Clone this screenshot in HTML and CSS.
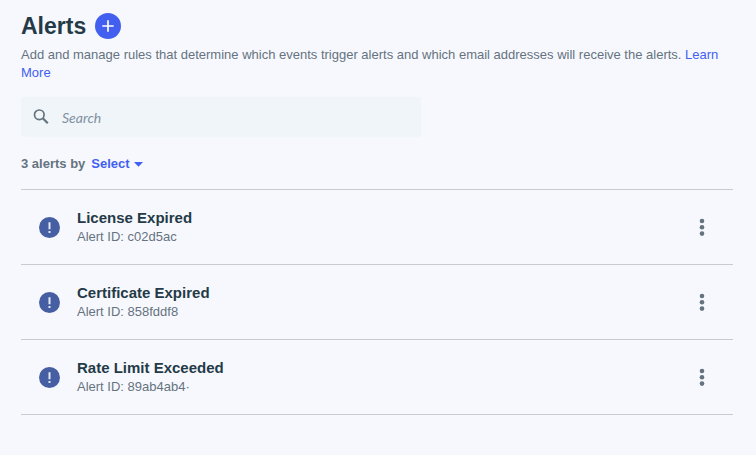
FILE: index.html
```html
<!DOCTYPE html>
<html lang="en">
<head>
  <meta charset="UTF-8" />
  <meta name="viewport" content="width=device-width, initial-scale=1.0" />
  <title>Alerts</title>
  <link rel="stylesheet" href="styles.css">
</head>
<body>
  <main>
    <header class="page-header">
      <h1>Alerts</h1>
      <button type="button" class="add-button" aria-label="Add alert">
        <svg width="26" height="26" viewBox="0 0 26 26"><path d="M13 7.3v11.4M7.3 13h11.4" stroke="#fff" stroke-width="1.7" /></svg>
      </button>
    </header>
    <p class="description">Add and manage rules that determine which events trigger alerts and which email addresses will receive the alerts. <a href="#">Learn More</a></p>

    <label class="search">
      <svg width="16" height="16" viewBox="0 0 16 16" fill="none" stroke="#65737e"><circle cx="6.3" cy="5.8" r="4.8" stroke-width="1.7" /><path d="M9.8 9.3l5 5" stroke-width="2.2" /></svg>
      <input type="search" placeholder="Search" aria-label="Search" />
    </label>

    <div class="sort">
      <label for="sort-by">3 alerts by</label>
      <div class="dropdown">
        <select id="sort-by">
          <option>Select</option>
        </select>
        <svg width="9" height="5" viewBox="0 0 9 5"><path d="M0 0h9L4.5 4.8z" fill="#415ff0" /></svg>
      </div>
    </div>

    <ul class="alerts">
      <li class="alert">
        <svg class="alert-icon" width="21" height="21" viewBox="0 0 21 21"><circle cx="10.5" cy="10.5" r="10.5" fill="#465fa3" /><path d="M9.5 5.2h2v7h-2zM9.5 13.9h2v2h-2z" fill="#e4e9f6" /></svg>
        <div class="info">
          <h2>License Expired</h2>
          <p>Alert ID: c02d5ac</p>
        </div>
        <button type="button" class="menu-button" aria-label="License Expired options">
          <svg width="6" height="18" viewBox="0 0 6 18" fill="#65737e"><circle cx="3" cy="3" r="2.3" /><circle cx="3" cy="9.3" r="2.3" /><circle cx="3" cy="15.6" r="2.3" /></svg>
        </button>
      </li>
      <li class="alert">
        <svg class="alert-icon" width="21" height="21" viewBox="0 0 21 21"><circle cx="10.5" cy="10.5" r="10.5" fill="#465fa3" /><path d="M9.5 5.2h2v7h-2zM9.5 13.9h2v2h-2z" fill="#e4e9f6" /></svg>
        <div class="info">
          <h2>Certificate Expired</h2>
          <p>Alert ID: 858fddf8</p>
        </div>
        <button type="button" class="menu-button" aria-label="Certificate Expired options">
          <svg width="6" height="18" viewBox="0 0 6 18" fill="#65737e"><circle cx="3" cy="3" r="2.3" /><circle cx="3" cy="9.3" r="2.3" /><circle cx="3" cy="15.6" r="2.3" /></svg>
        </button>
      </li>
      <li class="alert">
        <svg class="alert-icon" width="21" height="21" viewBox="0 0 21 21"><circle cx="10.5" cy="10.5" r="10.5" fill="#465fa3" /><path d="M9.5 5.2h2v7h-2zM9.5 13.9h2v2h-2z" fill="#e4e9f6" /></svg>
        <div class="info">
          <h2>Rate Limit Exceeded</h2>
          <p>Alert ID: 89ab4ab4·</p>
        </div>
        <button type="button" class="menu-button" aria-label="Rate Limit Exceeded options">
          <svg width="6" height="18" viewBox="0 0 6 18" fill="#65737e"><circle cx="3" cy="3" r="2.3" /><circle cx="3" cy="9.3" r="2.3" /><circle cx="3" cy="15.6" r="2.3" /></svg>
        </button>
      </li>
    </ul>
  </main>
</body>
</html>
```

FILE: styles.css
```css
* {
  box-sizing: border-box;
}
body {
  margin: 0;
  padding: 13px 23px 24px 21px;
  background-color: #f7f8fe;
  color: #65737e;
  font-family: "Liberation Sans", Arial, sans-serif;
  font-size: 13px;
  line-height: 18px;
}
h1, h2, p, ul {
  margin: 0;
  padding: 0;
}
button {
  padding: 0;
  border: none;
  background: none;
  cursor: pointer;
}
svg {
  display: block;
  flex: none;
}
a {
  color: #415ff0;
  text-decoration: none;
}
.page-header {
  display: flex;
  align-items: center;
  gap: 9px;
}
h1 {
  color: #243b47;
  font-size: 23px;
  line-height: 26px;
}
.add-button {
  border-radius: 50%;
  background-color: #435ff0;
}
.description {
  margin-top: 7px;
}
.search {
  display: flex;
  align-items: center;
  gap: 13px;
  max-width: 400px;
  height: 40px;
  margin-top: 15px;
  padding: 0 12px;
  border-radius: 2px;
  background-color: #eff5f8;
}
.search input {
  flex: 1;
  min-width: 0;
  padding: 0;
  border: none;
  outline: none;
  background: none;
  color: #243b47;
  font: 14px Lato, sans-serif;
}
.search input::placeholder {
  color: #8090a2;
  font-style: italic;
}
.sort {
  display: flex;
  align-items: center;
  gap: 6px;
  margin-top: 18px;
  font-weight: bold;
}
.dropdown {
  display: flex;
  align-items: center;
  gap: 4px;
}
.dropdown select {
  appearance: none;
  padding: 0;
  border: none;
  background: none;
  color: #415ff0;
  font: inherit;
  cursor: pointer;
}
.alerts {
  margin-top: 16px;
  border-top: 1px solid #c8cbd0;
  list-style: none;
}
.alert {
  display: flex;
  align-items: center;
  gap: 17px;
  padding: 18px;
  border-bottom: 1px solid #c8cbd0;
}
.info {
  flex: 1;
}
.info h2 {
  color: #243b47;
  font-size: 15px;
  line-height: 20px;
}
.menu-button {
  padding: 0 10px;
}
```
